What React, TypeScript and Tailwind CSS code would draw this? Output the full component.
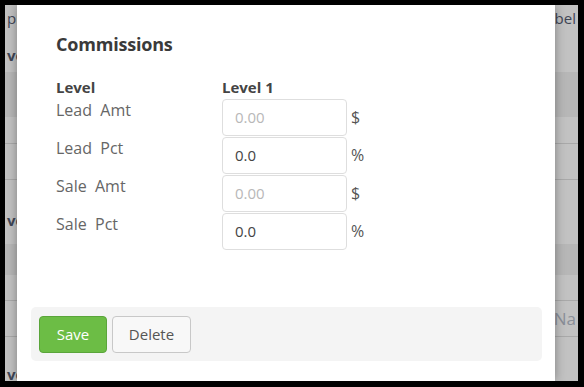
// App.tsx
const rows = [
  { label: 'Lead  Amt', value: '', placeholder: '0.00', unit: '$' },
  { label: 'Lead  Pct', value: '0.0', placeholder: '', unit: '%' },
  { label: 'Sale  Amt', value: '', placeholder: '0.00', unit: '$' },
  { label: 'Sale  Pct', value: '0.0', placeholder: '', unit: '%' },
]

export default function App() {
  return (
    <div className="w-[584px] h-[387px] bg-black pt-[5px] pl-[5px] pr-[6px] pb-[6px] font-['Open_Sans','Liberation_Sans',sans-serif]">
      <div className="relative w-full h-full overflow-hidden bg-[#c2c2c2] text-[15px] text-[#3f4656]">
        {/* page behind the dialog */}
        <div className="flex flex-col h-full">
          <div className="h-[67px] flex justify-between pr-[2px]">
            <div className="flex flex-col pl-[2px]">
              <span className="leading-[20px] mt-[3px]">pl</span>
              <span className="leading-[20px] mt-[17px] font-bold">ve</span>
            </div>
            <span className="leading-[20px] mt-[3px]">bel</span>
          </div>
          <div className="h-[45px] bg-[#b7b7b7]" />
          <div className="h-[27px] border-b border-[#a9a9a9]" />
          <div className="h-[36px] border-b border-[#a9a9a9]" />
          <div className="h-[64px] pl-[2px] flex items-end">
            <span className="font-bold leading-[20px] mb-[14px]">ve</span>
          </div>
          <div className="h-[31px] bg-[#b7b7b7]" />
          <div className="h-[26px] border-b border-[#a9a9a9]" />
          <div className="h-[36px] border-b border-[#a9a9a9] flex justify-end items-center pr-[2px]">
            <span className="text-[#8a8f99] text-[17px]">n Na</span>
          </div>
          <div className="flex-1 flex items-end pl-[2px]">
            <span className="font-bold leading-[14px]">ve</span>
          </div>
        </div>

        {/* dialog */}
        <div className="absolute left-[12px] top-0 w-[538px] h-[376px] bg-white shadow-[0_0_10px_rgba(0,0,0,0.35)] flex flex-col">
          <div className="pl-[39px] pt-[28px] flex-1">
            <h2 className="text-[18px] font-bold text-[#3a3a3a] leading-[22px] tracking-[-0.2px]">Commissions</h2>
            <div className="flex mt-[22px]">
              <div className="w-[166px] flex flex-col text-[#666]">
                <div className="font-bold text-[#444] text-[15px] leading-[20px] h-[23px]">Level</div>
                {rows.map((r) => (
                  <div key={r.label} className="h-[38px] whitespace-pre leading-[20px] text-[16px]">
                    {r.label}
                  </div>
                ))}
              </div>
              <div className="flex flex-col">
                <div className="font-bold text-[#444] leading-[20px] h-[21px]">Level 1</div>
                {rows.map((r) => (
                  <div key={r.label} className="flex items-center h-[38px]">
                    <input
                      readOnly
                      value={r.value}
                      placeholder={r.placeholder}
                      className="w-[125px] h-[37px] border border-[#dedede] rounded-[4px] px-[12px] text-[15px] text-[#444] placeholder:text-[#b8b8b8] outline-none bg-white"
                    />
                    <span className="ml-[4px] text-[#555] text-[16px]">{r.unit}</span>
                  </div>
                ))}
              </div>
            </div>
          </div>
          <div className="mx-[14px] mb-[20px] mr-[13px] h-[54px] bg-[#f4f4f4] rounded-[5px] flex items-center gap-[5px] px-[8px]">
            <button className="w-[68px] h-[37px] rounded-[4px] bg-[#6cbd45] border border-[#5aa53a] text-white text-[15px]">
              Save
            </button>
            <button className="w-[79px] h-[37px] rounded-[4px] bg-[#f8f8f8] border border-[#c8c8c8] text-[#555] text-[15px]">
              Delete
            </button>
          </div>
        </div>
      </div>
    </div>
  )
}
